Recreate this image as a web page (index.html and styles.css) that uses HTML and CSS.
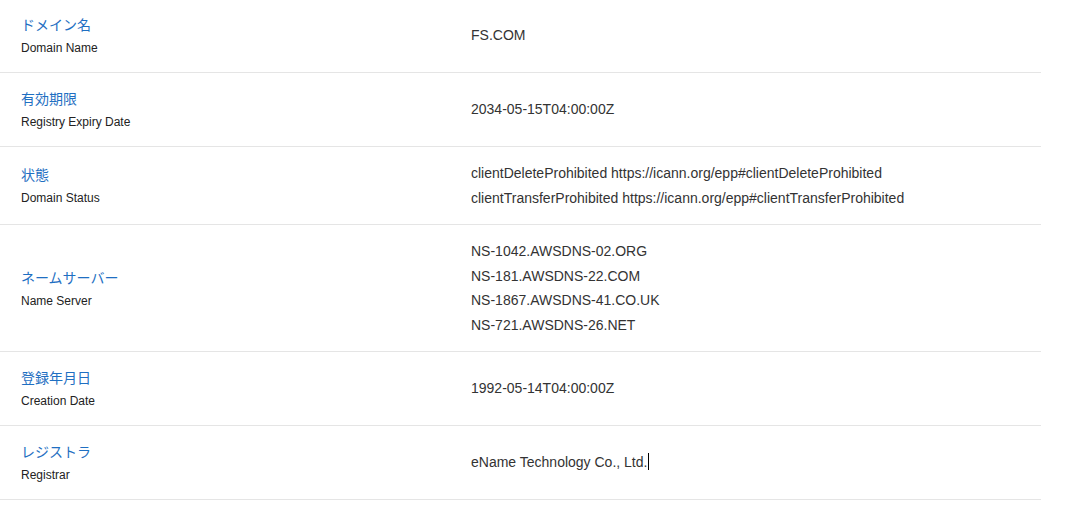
FILE: index.html
```html
<!DOCTYPE html>
<html lang="ja">
<head>
<meta charset="utf-8">
<title>Whois</title>
<link rel="stylesheet" href="styles.css">
</head>
<body>
<table class="whois">
  <tbody>
    <tr>
      <td class="label"><div class="jp">ドメイン名</div><div class="en">Domain Name</div></td>
      <td class="value"><div>FS.COM</div></td>
    </tr>
    <tr>
      <td class="label"><div class="jp">有効期限</div><div class="en">Registry Expiry Date</div></td>
      <td class="value"><div>2034-05-15T04:00:00Z</div></td>
    </tr>
    <tr>
      <td class="label"><div class="jp">状態</div><div class="en">Domain Status</div></td>
      <td class="value"><div>clientDeleteProhibited https://icann.org/epp#clientDeleteProhibited</div><div>clientTransferProhibited https://icann.org/epp#clientTransferProhibited</div></td>
    </tr>
    <tr>
      <td class="label"><div class="jp">ネームサーバー</div><div class="en">Name Server</div></td>
      <td class="value"><div>NS-1042.AWSDNS-02.ORG</div><div>NS-181.AWSDNS-22.COM</div><div>NS-1867.AWSDNS-41.CO.UK</div><div>NS-721.AWSDNS-26.NET</div></td>
    </tr>
    <tr>
      <td class="label"><div class="jp">登録年月日</div><div class="en">Creation Date</div></td>
      <td class="value"><div>1992-05-14T04:00:00Z</div></td>
    </tr>
    <tr>
      <td class="label"><div class="jp">レジストラ</div><div class="en">Registrar</div></td>
      <td class="value"><div>eName Technology Co., Ltd.<span class="caret"></span></div></td>
    </tr>
  </tbody>
</table>
</body>
</html>
```

FILE: styles.css
```css
html, body {
  margin: 0;
  padding: 0;
  background: #ffffff;
}
body {
  font-family: "Liberation Sans", Arial, "Noto Sans CJK JP", sans-serif;
  color: #333333;
}
.whois {
  width: 1041px;
  border-collapse: collapse;
  margin-top: -1px;
}
.whois td {
  border-bottom: 1px solid #e5e5e5;
  vertical-align: middle;
  padding: 14px 0;
}
.label {
  width: 450px;
  padding-left: 21px !important;
}
.jp {
  font-family: "Noto Sans CJK JP", "Liberation Sans", sans-serif;
  font-size: 14px;
  line-height: 22px;
  color: #1f6fc2;
}
.en {
  font-size: 12px;
  line-height: 20px;
  padding-top: 3px;
  color: #222222;
}
.value {
  font-size: 14px;
  line-height: 24.5px;
  color: #333333;
}
.caret {
  display: inline-block;
  width: 1px;
  height: 17px;
  background: #000000;
  vertical-align: -3px;
  margin-left: 1px;
}
```
